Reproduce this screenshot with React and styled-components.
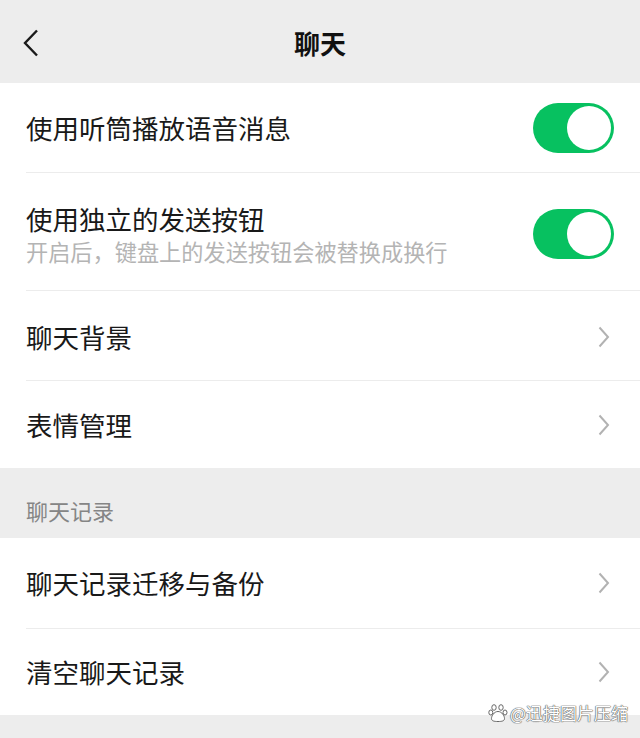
import React, { useState } from 'react';
import styled, { createGlobalStyle } from 'styled-components';

const GlobalStyle = createGlobalStyle`
  html, body {
    margin: 0;
    padding: 0;
    background: #ededed;
  }
  body {
    font-family: "Noto Sans CJK SC", "Noto Sans", sans-serif;
    -webkit-font-smoothing: antialiased;
  }
`;

// Estrutura da página
const Page = styled.div`
  position: relative;
  min-height: 738px;
  background: #ededed;
  display: flex;
  flex-direction: column;
`;

const NavBar = styled.header`
  height: 83px;
  display: grid;
  grid-template-columns: 80px 1fr 80px;
  align-items: center;
  padding-top: 3px;
  box-sizing: border-box;
`;

const BackButton = styled.button`
  border: none;
  background: none;
  padding: 0 0 0 22px;
  display: flex;
  align-items: center;
  cursor: pointer;
`;

const NavTitle = styled.h1`
  margin: 0;
  text-align: center;
  font-size: 26px;
  font-weight: 700;
  color: #111;
  line-height: 1;
`;

const Group = styled.section`
  background: #fff;
`;

const Cell = styled.div`
  min-height: ${(p) => p.$height || 89}px;
  margin-left: 26px;
  padding-right: ${(p) => (p.$switch ? 26 : 30)}px;
  padding-top: ${(p) => p.$offset || 0}px;
  box-sizing: border-box;
  display: flex;
  align-items: center;
  justify-content: space-between;

  & + & {
    border-top: 1px solid #ececec;
  }
`;

const CellText = styled.div`
  display: flex;
  flex-direction: column;
`;

const CellTitle = styled.span`
  font-size: 26.5px;
  line-height: 34px;
  color: #191919;
`;

const CellDesc = styled.span`
  font-size: 22.2px;
  line-height: 30px;
  color: #b4b4b4;
`;

const SectionTitle = styled.div`
  height: 70px;
  padding: 14px 0 0 26px;
  box-sizing: border-box;
  display: flex;
  align-items: center;
  font-size: 22px;
  color: #858585;
`;

const SwitchTrack = styled.button`
  width: 81px;
  height: 50px;
  border-radius: 25px;
  border: none;
  padding: 3px;
  box-sizing: border-box;
  background: ${(p) => (p.$on ? '#07c160' : '#e5e5e5')};
  display: flex;
  justify-content: ${(p) => (p.$on ? 'flex-end' : 'flex-start')};
  cursor: pointer;
`;

const SwitchKnob = styled.span`
  width: 44px;
  height: 44px;
  border-radius: 50%;
  background: #fff;
`;

const Watermark = styled.div`
  position: absolute;
  right: 12px;
  bottom: 13px;
  display: flex;
  align-items: center;
  gap: 2px;
  font-size: 17px;
  color: #fff;
  text-shadow: 0 0 1px #555, 0 0 1px #555, 0 0 1px #555;
`;

const Chevron = () => (
  <svg width="12" height="22" viewBox="0 0 12 22">
    <path d="M1.5 1.5 L10 11 L1.5 20.5" fill="none" stroke="#b2b2b2" strokeWidth="2" />
  </svg>
);

const BackIcon = () => (
  <svg width="18" height="28" viewBox="0 0 18 28">
    <path d="M15 1.5 L3 14 L15 26.5" fill="none" stroke="#1a1a1a" strokeWidth="2.4" />
  </svg>
);

const Paw = () => (
  <svg width="20" height="20" viewBox="0 0 20 20">
    <g fill="#fff" stroke="#666" strokeWidth="1">
      <ellipse cx="6" cy="4.5" rx="2.2" ry="2.8" />
      <ellipse cx="13" cy="4.5" rx="2.2" ry="2.8" />
      <ellipse cx="2.8" cy="9.5" rx="2" ry="2.5" />
      <ellipse cx="17" cy="9.5" rx="2" ry="2.5" />
      <path d="M10 8.5 C6 8.5 3.5 13 3.5 15.5 C3.5 18 6 18.5 10 18.5 C14 18.5 16.5 18 16.5 15.5 C16.5 13 14 8.5 10 8.5 Z" />
    </g>
  </svg>
);

const Switch = ({ on, onToggle }) => (
  <SwitchTrack $on={on} onClick={onToggle}>
    <SwitchKnob />
  </SwitchTrack>
);

const App = () => {
  const [earpiece, setEarpiece] = useState(true);
  const [sendButton, setSendButton] = useState(true);

  return (
    <Page>
      <GlobalStyle />
      <NavBar>
        <BackButton>
          <BackIcon />
        </BackButton>
        <NavTitle>聊天</NavTitle>
        <span />
      </NavBar>

      <Group>
        <Cell $switch>
          <CellTitle>使用听筒播放语音消息</CellTitle>
          <Switch on={earpiece} onToggle={() => setEarpiece(!earpiece)} />
        </Cell>
        <Cell $switch $height={118} $offset={4}>
          <CellText>
            <CellTitle>使用独立的发送按钮</CellTitle>
            <CellDesc>开启后，键盘上的发送按钮会被替换成换行</CellDesc>
          </CellText>
          <Switch on={sendButton} onToggle={() => setSendButton(!sendButton)} />
        </Cell>
        <Cell $height={90} $offset={2}>
          <CellTitle>聊天背景</CellTitle>
          <Chevron />
        </Cell>
        <Cell $height={88}>
          <CellTitle>表情管理</CellTitle>
          <Chevron />
        </Cell>
      </Group>

      <SectionTitle>聊天记录</SectionTitle>

      <Group>
        <Cell $height={90}>
          <CellTitle>聊天记录迁移与备份</CellTitle>
          <Chevron />
        </Cell>
        <Cell $height={87}>
          <CellTitle>清空聊天记录</CellTitle>
          <Chevron />
        </Cell>
      </Group>

      <Watermark>
        <Paw />
        <span>@迅捷图片压缩</span>
      </Watermark>
    </Page>
  );
};

export default App;
